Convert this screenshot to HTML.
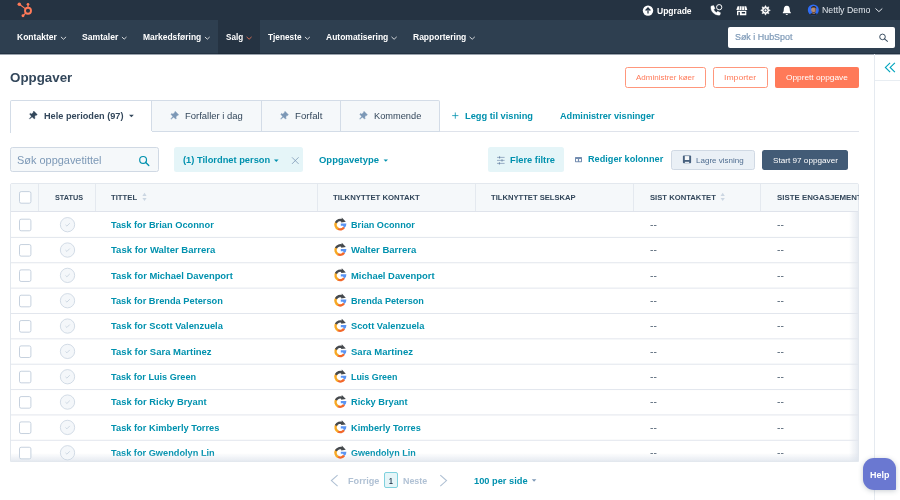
<!DOCTYPE html>
<html lang="no"><head><meta charset="utf-8"><title>Oppgaver</title>
<style>
html,body{margin:0;padding:0;}
body{width:900px;height:500px;overflow:hidden;background:#fff;position:relative;font-family:"Liberation Sans",sans-serif;}
.t{position:absolute;white-space:nowrap;line-height:1;transform-origin:0 50%;display:block;}
.a{position:absolute;box-sizing:border-box;}
svg{position:absolute;overflow:visible;}
</style></head><body>
<div class="a" style="left:0.00px;top:0.00px;width:900.00px;height:20.00px;background:#253342;"></div>
<div class="a" style="left:0.00px;top:20.00px;width:900.00px;height:34.00px;background:#2e3f50;"></div>
<div class="a" style="left:218.00px;top:20.00px;width:42.00px;height:34.00px;background:#253342;"></div>
<div class="a" style="left:0.00px;top:53.00px;width:900.00px;height:1.00px;background:rgba(20,32,45,0.4);"></div>
<div class="a" style="left:0.00px;top:54.00px;width:900.00px;height:1.00px;background:#9ba4ae;"></div>
<div class="a" style="left:728.00px;top:26.50px;width:167.00px;height:21.50px;background:#fff;border-radius:2px;"></div>
<div class="a" style="left:874.00px;top:54.00px;width:1.00px;height:446.00px;background:#e5eaf0;"></div>
<div class="a" style="left:875.00px;top:79.60px;width:25.00px;height:0.80px;background:#e8edf2;"></div>
<div class="a" style="left:625.10px;top:67.20px;width:80.60px;height:20.70px;border:1px solid #ff977c;border-radius:2.5px;background:#fff;"></div>
<div class="a" style="left:713.10px;top:67.20px;width:54.80px;height:20.70px;border:1px solid #ff977c;border-radius:2.5px;background:#fff;"></div>
<div class="a" style="left:775.00px;top:67.20px;width:83.80px;height:20.70px;background:#ff7a59;border-radius:2px;"></div>
<div class="a" style="left:10.00px;top:131.00px;width:849.00px;height:1.00px;background:#dfe3eb;"></div>
<div class="a" style="left:152.00px;top:100.00px;width:288.00px;height:32.00px;background:#f5f8fa;border:1px solid #d3dce7;border-left:none;border-radius:0 2px 0 0;"></div>
<div class="a" style="left:261.00px;top:101.00px;width:1.00px;height:30.00px;background:#d3dce7;"></div>
<div class="a" style="left:340.00px;top:101.00px;width:1.00px;height:30.00px;background:#d3dce7;"></div>
<div class="a" style="left:10.00px;top:100.00px;width:142.00px;height:33.00px;background:#fff;border:1px solid #d3dce7;border-bottom:none;border-radius:2px 0 0 0;"></div>
<div class="a" style="left:151.00px;top:131.00px;width:1.00px;height:2.00px;background:#fff;"></div>
<div class="a" style="left:10.00px;top:147.00px;width:149.00px;height:25.40px;background:#f5f8fa;border:1px solid #d0d9e4;border-radius:2.5px;"></div>
<div class="a" style="left:174.00px;top:147.00px;width:129.00px;height:25.40px;background:#e5f5f8;border-radius:2.5px;"></div>
<div class="a" style="left:488.00px;top:147.00px;width:76.00px;height:25.40px;background:#e5f5f8;border-radius:2.5px;"></div>
<div class="a" style="left:671.00px;top:150.00px;width:84.00px;height:19.60px;background:#eaf0f6;border:1px solid #d0d9e4;border-radius:2.5px;"></div>
<div class="a" style="left:762.00px;top:150.00px;width:86.00px;height:19.60px;background:#425b76;border-radius:2.5px;"></div>
<div class="a" style="left:10.00px;top:183.00px;width:849.00px;height:278.60px;border:1px solid #e3e8ee;border-radius:2px 2px 0 0;background:#fff;"></div>
<div class="a" style="left:10.50px;top:183.50px;width:847.70px;height:27.50px;background:#f5f8fa;"></div>
<div class="a" style="left:11.00px;top:211.00px;width:847.00px;height:1.00px;background:#dfe3eb;"></div>
<div class="a" style="left:38.20px;top:183.50px;width:0.80px;height:27.50px;background:#e4e9ef;"></div>
<div class="a" style="left:95.20px;top:183.50px;width:0.80px;height:27.50px;background:#e4e9ef;"></div>
<div class="a" style="left:317.00px;top:183.50px;width:0.80px;height:27.50px;background:#e4e9ef;"></div>
<div class="a" style="left:475.20px;top:183.50px;width:0.80px;height:27.50px;background:#e4e9ef;"></div>
<div class="a" style="left:633.00px;top:183.50px;width:0.80px;height:27.50px;background:#e4e9ef;"></div>
<div class="a" style="left:760.00px;top:183.50px;width:0.80px;height:27.50px;background:#e4e9ef;"></div>
<div class="a" style="left:384.30px;top:472.30px;width:13.70px;height:16.00px;background:#e5f5f8;border:1px solid #7fd1de;border-radius:2px;"></div>
<div class="a" style="left:863.00px;top:457.80px;width:33.20px;height:32.00px;background:#6a78d1;border-radius:11px 11px 1px 11px;box-shadow:0 1px 5px rgba(45,62,80,0.25);"></div>
<div class="a" style="left:0;top:0;width:900px;height:500px;overflow:hidden;will-change:transform;">
<span class="t" id="t0" style="left:656.70px;top:7.00px;font-size:8.84px;font-weight:700;color:#ffffff;transform:scaleX(0.9661);">Upgrade</span>
<span class="t" id="t1" style="left:822.00px;top:6.00px;font-size:9.1px;font-weight:400;color:#e3e8ee;transform:scaleX(0.9674);">Nettly Demo</span>
<span class="t" id="t2" style="left:17.20px;top:33.00px;font-size:8.84px;font-weight:700;color:#ffffff;transform:scaleX(0.9656);">Kontakter</span>
<span class="t" id="t3" style="left:81.70px;top:33.00px;font-size:8.84px;font-weight:700;color:#ffffff;transform:scaleX(0.9733);">Samtaler</span>
<span class="t" id="t4" style="left:142.80px;top:33.00px;font-size:8.84px;font-weight:700;color:#ffffff;transform:scaleX(0.9568);">Markedsføring</span>
<span class="t" id="t5" style="left:226.20px;top:33.00px;font-size:8.84px;font-weight:700;color:#ffffff;transform:scaleX(0.9166);">Salg</span>
<span class="t" id="t6" style="left:267.60px;top:33.00px;font-size:8.84px;font-weight:700;color:#ffffff;transform:scaleX(0.9378);">Tjeneste</span>
<span class="t" id="t7" style="left:325.70px;top:33.00px;font-size:8.84px;font-weight:700;color:#ffffff;transform:scaleX(0.9622);">Automatisering</span>
<span class="t" id="t8" style="left:412.50px;top:33.00px;font-size:8.84px;font-weight:700;color:#ffffff;transform:scaleX(0.9617);">Rapportering</span>
<span class="t" id="t9" style="left:734.60px;top:33.00px;font-size:9.1px;font-weight:400;-webkit-text-stroke:0.2px currentColor;color:#7c98b6;transform:scaleX(0.9788);">Søk i HubSpot</span>
<span class="t" id="t10" style="left:10.40px;top:71.00px;font-size:13.0px;font-weight:700;color:#33475b;transform:scaleX(1.0266);">Oppgaver</span>
<span class="t" id="t11" style="left:636.40px;top:74.00px;font-size:7.800000000000001px;font-weight:400;color:#ff7a59;transform:scaleX(1.0264);">Administrer køer</span>
<span class="t" id="t12" style="left:724.40px;top:74.00px;font-size:7.800000000000001px;font-weight:400;color:#ff7a59;transform:scaleX(1.1091);">Importer</span>
<span class="t" id="t13" style="left:786.00px;top:74.00px;font-size:7.800000000000001px;font-weight:400;color:#ffffff;transform:scaleX(1.0638);">Opprett oppgave</span>
<span class="t" id="t14" style="left:43.80px;top:112.00px;font-size:9.1px;font-weight:700;color:#33475b;transform:scaleX(1.0083);">Hele perioden (97)</span>
<span class="t" id="t15" style="left:185.20px;top:112.00px;font-size:9.1px;font-weight:400;color:#33475b;transform:scaleX(1.0412);">Forfaller i dag</span>
<span class="t" id="t16" style="left:295.00px;top:112.00px;font-size:9.1px;font-weight:400;color:#33475b;transform:scaleX(1.0628);">Forfalt</span>
<span class="t" id="t17" style="left:374.30px;top:112.00px;font-size:9.1px;font-weight:400;color:#33475b;transform:scaleX(1.0169);">Kommende</span>
<span class="t" id="t18" style="left:464.80px;top:112.00px;font-size:9.1px;font-weight:700;color:#0091ae;transform:scaleX(1.0194);">Legg til visning</span>
<span class="t" id="t19" style="left:560.10px;top:112.00px;font-size:9.1px;font-weight:700;color:#0091ae;transform:scaleX(1.0064);">Administrer visninger</span>
<span class="t" id="t20" style="left:17.20px;top:156.00px;font-size:10.4px;font-weight:400;color:#7c98b6;transform:scaleX(1.0523);">Søk oppgavetittel</span>
<span class="t" id="t21" style="left:182.80px;top:156.00px;font-size:9.1px;font-weight:700;color:#0091ae;transform:scaleX(1.0232);">(1) Tilordnet person</span>
<span class="t" id="t22" style="left:319.40px;top:156.00px;font-size:9.1px;font-weight:700;color:#0091ae;transform:scaleX(1.0415);">Oppgavetype</span>
<span class="t" id="t23" style="left:510.30px;top:156.00px;font-size:9.1px;font-weight:700;color:#0091ae;transform:scaleX(1.0235);">Flere filtre</span>
<span class="t" id="t24" style="left:587.80px;top:155.00px;font-size:9.1px;font-weight:700;color:#0091ae;transform:scaleX(1.0054);">Rediger kolonner</span>
<span class="t" id="t25" style="left:695.50px;top:157.00px;font-size:7.800000000000001px;font-weight:400;color:#506e91;transform:scaleX(1.0282);">Lagre visning</span>
<span class="t" id="t26" style="left:772.90px;top:157.00px;font-size:7.800000000000001px;font-weight:400;color:#ffffff;transform:scaleX(1.0470);">Start 97 oppgaver</span>
<span class="t" id="t27" style="left:54.70px;top:194.00px;font-size:7.800000000000001px;font-weight:700;color:#33475b;transform:scaleX(0.9357);">STATUS</span>
<span class="t" id="t28" style="left:111.40px;top:194.00px;font-size:7.800000000000001px;font-weight:700;color:#33475b;transform:scaleX(0.9878);">TITTEL</span>
<span class="t" id="t29" style="left:333.40px;top:194.00px;font-size:7.800000000000001px;font-weight:700;color:#33475b;transform:scaleX(0.9938);">TILKNYTTET KONTAKT</span>
<span class="t" id="t30" style="left:491.40px;top:194.00px;font-size:7.800000000000001px;font-weight:700;color:#33475b;transform:scaleX(0.9776);">TILKNYTTET SELSKAP</span>
<span class="t" id="t31" style="left:649.70px;top:194.00px;font-size:7.800000000000001px;font-weight:700;color:#33475b;transform:scaleX(0.9836);">SIST KONTAKTET</span>
<span class="t" id="t32" style="left:776.70px;top:194.00px;font-size:7.800000000000001px;font-weight:700;color:#33475b;transform:scaleX(1.0088);">SISTE ENGASJEMENT</span>
<span class="t" id="t33" style="left:111.40px;top:221.00px;font-size:9.1px;font-weight:700;color:#0091ae;transform:scaleX(1.0189);">Task for Brian Oconnor</span>
<span class="t" id="t34" style="left:351.10px;top:221.00px;font-size:9.1px;font-weight:700;color:#0091ae;transform:scaleX(1.0036);">Brian Oconnor</span>
<span class="t" id="t35" style="left:649.60px;top:221.00px;font-size:9.1px;font-weight:400;color:#33475b;transform:scaleX(1.1216);">--</span>
<span class="t" id="t36" style="left:776.50px;top:221.00px;font-size:9.1px;font-weight:400;color:#33475b;transform:scaleX(1.1216);">--</span>
<span class="t" id="t37" style="left:111.40px;top:246.00px;font-size:9.1px;font-weight:700;color:#0091ae;transform:scaleX(1.0464);">Task for Walter Barrera</span>
<span class="t" id="t38" style="left:351.10px;top:246.00px;font-size:9.1px;font-weight:700;color:#0091ae;transform:scaleX(1.0474);">Walter Barrera</span>
<span class="t" id="t39" style="left:649.60px;top:246.00px;font-size:9.1px;font-weight:400;color:#33475b;transform:scaleX(1.1216);">--</span>
<span class="t" id="t40" style="left:776.50px;top:246.00px;font-size:9.1px;font-weight:400;color:#33475b;transform:scaleX(1.1216);">--</span>
<span class="t" id="t41" style="left:111.40px;top:272.00px;font-size:9.1px;font-weight:700;color:#0091ae;transform:scaleX(1.0322);">Task for Michael Davenport</span>
<span class="t" id="t42" style="left:351.10px;top:272.00px;font-size:9.1px;font-weight:700;color:#0091ae;transform:scaleX(1.0339);">Michael Davenport</span>
<span class="t" id="t43" style="left:649.60px;top:272.00px;font-size:9.1px;font-weight:400;color:#33475b;transform:scaleX(1.1216);">--</span>
<span class="t" id="t44" style="left:776.50px;top:272.00px;font-size:9.1px;font-weight:400;color:#33475b;transform:scaleX(1.1216);">--</span>
<span class="t" id="t45" style="left:111.40px;top:297.00px;font-size:9.1px;font-weight:700;color:#0091ae;transform:scaleX(1.0173);">Task for Brenda Peterson</span>
<span class="t" id="t46" style="left:351.10px;top:297.00px;font-size:9.1px;font-weight:700;color:#0091ae;transform:scaleX(1.0016);">Brenda Peterson</span>
<span class="t" id="t47" style="left:649.60px;top:297.00px;font-size:9.1px;font-weight:400;color:#33475b;transform:scaleX(1.1216);">--</span>
<span class="t" id="t48" style="left:776.50px;top:297.00px;font-size:9.1px;font-weight:400;color:#33475b;transform:scaleX(1.1216);">--</span>
<span class="t" id="t49" style="left:111.40px;top:322.00px;font-size:9.1px;font-weight:700;color:#0091ae;transform:scaleX(1.0266);">Task for Scott Valenzuela</span>
<span class="t" id="t50" style="left:351.10px;top:322.00px;font-size:9.1px;font-weight:700;color:#0091ae;transform:scaleX(1.0214);">Scott Valenzuela</span>
<span class="t" id="t51" style="left:649.60px;top:322.00px;font-size:9.1px;font-weight:400;color:#33475b;transform:scaleX(1.1216);">--</span>
<span class="t" id="t52" style="left:776.50px;top:322.00px;font-size:9.1px;font-weight:400;color:#33475b;transform:scaleX(1.1216);">--</span>
<span class="t" id="t53" style="left:111.40px;top:348.00px;font-size:9.1px;font-weight:700;color:#0091ae;transform:scaleX(1.0440);">Task for Sara Martinez</span>
<span class="t" id="t54" style="left:351.10px;top:348.00px;font-size:9.1px;font-weight:700;color:#0091ae;transform:scaleX(1.0483);">Sara Martinez</span>
<span class="t" id="t55" style="left:649.60px;top:348.00px;font-size:9.1px;font-weight:400;color:#33475b;transform:scaleX(1.1216);">--</span>
<span class="t" id="t56" style="left:776.50px;top:348.00px;font-size:9.1px;font-weight:400;color:#33475b;transform:scaleX(1.1216);">--</span>
<span class="t" id="t57" style="left:111.40px;top:373.00px;font-size:9.1px;font-weight:700;color:#0091ae;transform:scaleX(1.0043);">Task for Luis Green</span>
<span class="t" id="t58" style="left:351.10px;top:373.00px;font-size:9.1px;font-weight:700;color:#0091ae;transform:scaleX(0.9765);">Luis Green</span>
<span class="t" id="t59" style="left:649.60px;top:373.00px;font-size:9.1px;font-weight:400;color:#33475b;transform:scaleX(1.1216);">--</span>
<span class="t" id="t60" style="left:776.50px;top:373.00px;font-size:9.1px;font-weight:400;color:#33475b;transform:scaleX(1.1216);">--</span>
<span class="t" id="t61" style="left:111.40px;top:398.00px;font-size:9.1px;font-weight:700;color:#0091ae;transform:scaleX(1.0299);">Task for Ricky Bryant</span>
<span class="t" id="t62" style="left:351.10px;top:398.00px;font-size:9.1px;font-weight:700;color:#0091ae;transform:scaleX(1.0178);">Ricky Bryant</span>
<span class="t" id="t63" style="left:649.60px;top:398.00px;font-size:9.1px;font-weight:400;color:#33475b;transform:scaleX(1.1216);">--</span>
<span class="t" id="t64" style="left:776.50px;top:398.00px;font-size:9.1px;font-weight:400;color:#33475b;transform:scaleX(1.1216);">--</span>
<span class="t" id="t65" style="left:111.40px;top:424.00px;font-size:9.1px;font-weight:700;color:#0091ae;transform:scaleX(1.0198);">Task for Kimberly Torres</span>
<span class="t" id="t66" style="left:351.10px;top:424.00px;font-size:9.1px;font-weight:700;color:#0091ae;transform:scaleX(1.0105);">Kimberly Torres</span>
<span class="t" id="t67" style="left:649.60px;top:424.00px;font-size:9.1px;font-weight:400;color:#33475b;transform:scaleX(1.1216);">--</span>
<span class="t" id="t68" style="left:776.50px;top:424.00px;font-size:9.1px;font-weight:400;color:#33475b;transform:scaleX(1.1216);">--</span>
<span class="t" id="t69" style="left:111.40px;top:449.00px;font-size:9.1px;font-weight:700;color:#0091ae;transform:scaleX(1.0126);">Task for Gwendolyn Lin</span>
<span class="t" id="t70" style="left:351.10px;top:449.00px;font-size:9.1px;font-weight:700;color:#0091ae;transform:scaleX(0.9928);">Gwendolyn Lin</span>
<span class="t" id="t71" style="left:649.60px;top:449.00px;font-size:9.1px;font-weight:400;color:#33475b;transform:scaleX(1.1216);">--</span>
<span class="t" id="t72" style="left:776.50px;top:449.00px;font-size:9.1px;font-weight:400;color:#33475b;transform:scaleX(1.1216);">--</span>
<span class="t" id="t73" style="left:348.00px;top:477.00px;font-size:9.1px;font-weight:700;color:#b0c1d4;transform:scaleX(1.0023);">Forrige</span>
<span class="t" id="t74" style="left:389.20px;top:477.00px;font-size:9.1px;font-weight:700;color:#33475b;transform:scaleX(0.7506);">1</span>
<span class="t" id="t75" style="left:403.00px;top:477.00px;font-size:9.1px;font-weight:700;color:#b0c1d4;transform:scaleX(0.9765);">Neste</span>
<span class="t" id="t76" style="left:473.90px;top:477.00px;font-size:9.1px;font-weight:700;color:#0091ae;transform:scaleX(1.0194);">100 per side</span>
<span class="t" id="t77" style="left:869.80px;top:471.00px;font-size:9.1px;font-weight:700;color:#ffffff;transform:scaleX(0.9838);">Help</span>
</div>
<div class="a" style="left:858.8px;top:182px;width:15px;height:31px;background:#fff;"></div>
<div class="a" style="left:848.5px;top:212px;width:9.5px;height:249px;background:linear-gradient(to right,rgba(223,227,235,0),rgba(220,226,235,0.7));"></div>
<div class="a" style="left:11px;top:452.5px;width:847px;height:8.5px;background:linear-gradient(to bottom,rgba(223,227,235,0),rgba(220,226,235,0.7));"></div>
<svg width="900" height="500" viewBox="0 0 900 500" style="left:0;top:0;">
<circle cx="28" cy="10.8" r="3" fill="none" stroke="#ff7a59" stroke-width="1.9"/>
<circle cx="28" cy="4.3" r="1.35" fill="#ff7a59"/><path d="M28 4.3 L28 8" stroke="#ff7a59" stroke-width="1.2"/>
<circle cx="19.3" cy="4.2" r="1.75" fill="#ff7a59"/><path d="M19.3 4.2 L25.6 8.9" stroke="#ff7a59" stroke-width="1.15"/>
<circle cx="23" cy="15.8" r="1.45" fill="#ff7a59"/><path d="M23 15.8 L25.8 13" stroke="#ff7a59" stroke-width="1.15"/>
<circle cx="648" cy="10.6" r="5.2" fill="#fff"/><path d="M648 13.6 L648 8.4 M645.6 10.5 L648 8.0 L650.4 10.5" fill="none" stroke="#253342" stroke-width="1.25" stroke-linejoin="miter"/>
<path d="M711 6.2 L713.6 5.5 L715 8.6 L713.7 9.6 C714.3 11 715.2 12 716.6 12.6 L717.6 11.3 L720.5 12.8 L719.9 15.1 C714.6 15.6 710.2 11.2 711 6.2 Z" fill="#fff" stroke="#fff" stroke-width="0.4" stroke-linejoin="round"/>
<circle cx="719.2" cy="7.2" r="2.65" fill="#253342" stroke="#fff" stroke-width="1.0"/>
<path d="M737.60 6.2 L739.47 6.2 L738.77 9.9 L736.30 9.9 Z" fill="#fff"/>
<path d="M740.03 6.2 L741.62 6.2 L741.52 9.9 L739.33 9.9 Z" fill="#fff"/>
<path d="M742.18 6.2 L743.77 6.2 L744.27 9.9 L742.08 9.9 Z" fill="#fff"/>
<path d="M744.33 6.2 L746.20 6.2 L747.30 9.9 L744.83 9.9 Z" fill="#fff"/>
<path d="M737 10.7 L746.3 10.7 L746.3 15.2 L737 15.2 Z M738.4 12.0 L738.4 15.2 L739.9 15.2 L739.9 12.0 Z M741.7 11.9 L741.7 13.5 L745.1 13.5 L745.1 11.9 Z" fill="#fff" fill-rule="evenodd"/>
<path d="M765.50 5.45 L766.65 7.53 L768.93 6.87 L768.27 9.15 L770.35 10.30 L768.27 11.45 L768.93 13.73 L766.65 13.07 L765.50 15.15 L764.35 13.07 L762.07 13.73 L762.73 11.45 L760.65 10.30 L762.73 9.15 L762.07 6.87 L764.35 7.53 Z" fill="#fff" stroke="#fff" stroke-width="0.5" stroke-linejoin="round"/>
<circle cx="765.5" cy="10.3" r="1.5" fill="none" stroke="#253342" stroke-width="0.95"/>
<path d="M786.8 5.8 C789.2 5.8 789.8 7.8 789.8 9.6 C789.8 11.2 790.2 12 790.8 12.6 L790.8 13.3 L782.8 13.3 L782.8 12.6 C783.4 12 783.8 11.2 783.8 9.6 C783.8 7.8 784.4 5.8 786.8 5.8 Z" fill="#fff"/><path d="M785.7 14.1 L787.9 14.1 C787.9 15.3 785.7 15.3 785.7 14.1 Z" fill="#fff"/>
<clipPath id="av"><circle cx="813.3" cy="10" r="5.5"/></clipPath>
<g clip-path="url(#av)"><rect x="807" y="4" width="13" height="12" fill="#2f6df6"/><ellipse cx="813.7" cy="16.4" rx="5.2" ry="3.3" fill="#20242b"/><rect x="812.5" y="11.6" width="2.5" height="2.4" fill="#8d6a59"/><ellipse cx="813.7" cy="9.6" rx="2.5" ry="3.45" fill="#b38b76"/><path d="M814.3 6.3 C816.6 6.6 816.6 11.6 814.6 13 C815.2 11 815.2 8.4 814.3 6.3 Z" fill="#6d5246" opacity="0.75"/><path d="M811.1 8.8 C810.6 5.0 816.9 5.0 816.3 8.8 C815.7 7.0 811.7 7.0 811.1 8.8 Z" fill="#2b211d"/><path d="M811.6 10.9 C812 13.8 815.4 13.8 815.8 10.9 C815.1 12.4 812.3 12.4 811.6 10.9 Z" fill="#5b4034" opacity="0.8"/></g>
<path d="M875.80 8.77 L878.90 11.63 L882.00 8.77" fill="none" stroke="#e3e8ee" stroke-width="1.0" stroke-linecap="round" stroke-linejoin="round"/>
<path d="M61.20 37.14 L63.50 39.26 L65.80 37.14" fill="none" stroke="#fff" stroke-width="0.8" stroke-linecap="round" stroke-linejoin="round"/>
<path d="M122.20 37.28 L124.20 39.12 L126.20 37.28" fill="none" stroke="#fff" stroke-width="0.8" stroke-linecap="round" stroke-linejoin="round"/>
<path d="M205.20 37.23 L207.30 39.17 L209.40 37.23" fill="none" stroke="#fff" stroke-width="0.8" stroke-linecap="round" stroke-linejoin="round"/>
<path d="M246.90 37.19 L249.10 39.21 L251.30 37.19" fill="none" stroke="#ff7a59" stroke-width="0.8" stroke-linecap="round" stroke-linejoin="round"/>
<path d="M305.20 37.19 L307.40 39.21 L309.60 37.19" fill="none" stroke="#fff" stroke-width="0.8" stroke-linecap="round" stroke-linejoin="round"/>
<path d="M391.80 37.14 L394.10 39.26 L396.40 37.14" fill="none" stroke="#fff" stroke-width="0.8" stroke-linecap="round" stroke-linejoin="round"/>
<path d="M469.90 37.14 L472.20 39.26 L474.50 37.14" fill="none" stroke="#fff" stroke-width="0.8" stroke-linecap="round" stroke-linejoin="round"/>
<circle cx="882.5" cy="36.9" r="2.8" fill="none" stroke="#33475b" stroke-width="0.95"/><path d="M884.48 38.88 L887.50 41.30" stroke="#33475b" stroke-width="1.045" stroke-linecap="round"/>
<path d="M890.1 62.8 L885.4 67.45 L890.1 72.1 M894.9 62.8 L890.2 67.45 L894.9 72.1" fill="none" stroke="#00a4bd" stroke-width="1.15"/>
<path d="M29.71 119.11 L32.15 117.03 L34.31 118.90 L35.23 117.98 L34.52 116.99 L35.79 115.01 L36.36 115.44 L37.28 114.52 L33.88 111.12 L32.96 112.04 L33.39 112.61 L31.41 113.88 L30.42 113.17 L29.50 114.09 L31.37 116.25 L29.29 118.69 Z" fill="#33475b" stroke="#33475b" stroke-width="0.3" stroke-linejoin="round"/>
<path d="M171.11 119.31 L173.55 117.23 L175.71 119.10 L176.63 118.18 L175.92 117.19 L177.19 115.21 L177.76 115.64 L178.68 114.72 L175.28 111.32 L174.36 112.24 L174.79 112.81 L172.81 114.08 L171.82 113.37 L170.90 114.29 L172.77 116.45 L170.69 118.89 Z" fill="#7c98b6" stroke="#7c98b6" stroke-width="0.3" stroke-linejoin="round"/>
<path d="M280.91 119.31 L283.35 117.23 L285.51 119.10 L286.43 118.18 L285.72 117.19 L286.99 115.21 L287.56 115.64 L288.48 114.72 L285.08 111.32 L284.16 112.24 L284.59 112.81 L282.61 114.08 L281.62 113.37 L280.70 114.29 L282.57 116.45 L280.49 118.89 Z" fill="#7c98b6" stroke="#7c98b6" stroke-width="0.3" stroke-linejoin="round"/>
<path d="M359.91 119.31 L362.35 117.23 L364.51 119.10 L365.43 118.18 L364.72 117.19 L365.99 115.21 L366.56 115.64 L367.48 114.72 L364.08 111.32 L363.16 112.24 L363.59 112.81 L361.61 114.08 L360.62 113.37 L359.70 114.29 L361.57 116.45 L359.49 118.89 Z" fill="#7c98b6" stroke="#7c98b6" stroke-width="0.3" stroke-linejoin="round"/>
<path d="M129.00 114.70 L133.80 114.70 L131.40 117.34 Z" fill="#33475b"/>
<path d="M452.2 115.6 L458.4 115.6 M455.3 112.5 L455.3 118.7" stroke="#0091ae" stroke-width="0.8"/>
<circle cx="143.1" cy="159.9" r="3.4" fill="none" stroke="#0091ae" stroke-width="1.2"/><path d="M145.50 162.30 L148.80 165.50" stroke="#0091ae" stroke-width="1.32" stroke-linecap="round"/>
<path d="M274.00 159.40 L278.60 159.40 L276.30 161.93 Z" fill="#0091ae"/>
<path d="M383.60 159.40 L388.00 159.40 L385.80 161.82 Z" fill="#0091ae"/>
<path d="M292 157.3 L298.6 163.9 M298.6 157.3 L292 163.9" stroke="#7c98b6" stroke-width="0.8"/>
<path d="M497 157.4 L504.6 157.4 M497 160.4 L504.6 160.4 M497 163.4 L504.6 163.4" stroke="#6480a3" stroke-width="0.6"/>
<path d="M499.6 156.3 L499.6 158.5 M502 159.3 L502 161.5 M499.4 162.3 L499.4 164.5" stroke="#6480a3" stroke-width="0.9"/>
<path d="M575.6 157.1 L581.4 157.1 Q582 157.1 582 157.7 L582 161.6 Q582 162.2 581.4 162.2 L575.6 162.2 Q575 162.2 575 161.6 L575 157.7 Q575 157.1 575.6 157.1 Z M576 158.9 L576 161.3 L577.9 161.3 L577.9 158.9 Z M579.1 158.9 L579.1 161.3 L581 161.3 L581 158.9 Z" fill="#748db0" fill-rule="evenodd"/>
<rect x="682.9" y="155.6" width="8.2" height="7.6" rx="0.9" fill="#47617f"/>
<rect x="684.8" y="156.1" width="4.4" height="3.9" fill="#f7f9fb"/>
<rect x="684.9" y="161.8" width="4.2" height="1.4" fill="#e4eaf1"/>
<path d="M142.4 195.9 L146.6 195.9 L144.5 192.7 Z" fill="#cbd6e2"/><path d="M142.4 197.9 L146.6 197.9 L144.5 201 Z" fill="#cbd6e2"/>
<path d="M720.6 195.9 L724.8000000000001 195.9 L722.7 192.7 Z" fill="#cbd6e2"/><path d="M720.6 197.9 L724.8000000000001 197.9 L722.7 201 Z" fill="#cbd6e2"/>
<rect x="10.6" y="236.90" width="847.6" height="1" fill="#e2e6ed"/>
<rect x="10.6" y="262.26" width="847.6" height="1" fill="#e2e6ed"/>
<rect x="10.6" y="287.62" width="847.6" height="1" fill="#e2e6ed"/>
<rect x="10.6" y="312.98" width="847.6" height="1" fill="#e2e6ed"/>
<rect x="10.6" y="338.34" width="847.6" height="1" fill="#e2e6ed"/>
<rect x="10.6" y="363.70" width="847.6" height="1" fill="#e2e6ed"/>
<rect x="10.6" y="389.06" width="847.6" height="1" fill="#e2e6ed"/>
<rect x="10.6" y="414.42" width="847.6" height="1" fill="#e2e6ed"/>
<rect x="10.6" y="439.78" width="847.6" height="1" fill="#e2e6ed"/>
<rect x="19.5" y="191.6" width="11.4" height="11.6" rx="1.6" fill="#fff" stroke="#c0ccda" stroke-width="0.9"/>
<rect x="19.5" y="219.20" width="11.4" height="11.6" rx="1.6" fill="#fff" stroke="#c0ccda" stroke-width="0.9"/>
<circle cx="67.5" cy="224.70" r="7.15" fill="#f4f7fa" stroke="#c8d3df" stroke-width="0.8"/>
<path d="M65.5 224.80 L66.9 226.10 L69.8 223.20" fill="none" stroke="#c3cfdc" stroke-width="0.8"/>
<path d="M344.05 227.40 A4.7 4.7 0 0 1 337.85 228.77" fill="none" stroke="#f2672a" stroke-width="2.4"/><path d="M338.21 228.96 A4.7 4.7 0 0 1 336.35 222.00" fill="none" stroke="#f7a823" stroke-width="2.4"/><path d="M335.94 222.71 A4.7 4.7 0 0 1 342.55 220.63" fill="none" stroke="#45494d" stroke-width="2.4"/><path d="M341.80 217.50 L345.80 221.70 L341.10 222.40 Z" fill="#45494d"/><path d="M340.80 223.60 L346.40 223.60 L346.00 226.10 L344.40 228.00 L343.00 225.80 L340.80 225.80 Z" fill="#5a94f3"/>
<rect x="19.5" y="244.54" width="11.4" height="11.6" rx="1.6" fill="#fff" stroke="#c0ccda" stroke-width="0.9"/>
<circle cx="67.5" cy="250.04" r="7.15" fill="#f4f7fa" stroke="#c8d3df" stroke-width="0.8"/>
<path d="M65.5 250.14 L66.9 251.44 L69.8 248.54" fill="none" stroke="#c3cfdc" stroke-width="0.8"/>
<path d="M344.05 252.74 A4.7 4.7 0 0 1 337.85 254.11" fill="none" stroke="#f2672a" stroke-width="2.4"/><path d="M338.21 254.30 A4.7 4.7 0 0 1 336.35 247.34" fill="none" stroke="#f7a823" stroke-width="2.4"/><path d="M335.94 248.05 A4.7 4.7 0 0 1 342.55 245.97" fill="none" stroke="#45494d" stroke-width="2.4"/><path d="M341.80 242.84 L345.80 247.04 L341.10 247.74 Z" fill="#45494d"/><path d="M340.80 248.94 L346.40 248.94 L346.00 251.44 L344.40 253.34 L343.00 251.14 L340.80 251.14 Z" fill="#5a94f3"/>
<rect x="19.5" y="269.88" width="11.4" height="11.6" rx="1.6" fill="#fff" stroke="#c0ccda" stroke-width="0.9"/>
<circle cx="67.5" cy="275.38" r="7.15" fill="#f4f7fa" stroke="#c8d3df" stroke-width="0.8"/>
<path d="M65.5 275.48 L66.9 276.78 L69.8 273.88" fill="none" stroke="#c3cfdc" stroke-width="0.8"/>
<path d="M344.05 278.08 A4.7 4.7 0 0 1 337.85 279.45" fill="none" stroke="#f2672a" stroke-width="2.4"/><path d="M338.21 279.64 A4.7 4.7 0 0 1 336.35 272.68" fill="none" stroke="#f7a823" stroke-width="2.4"/><path d="M335.94 273.39 A4.7 4.7 0 0 1 342.55 271.31" fill="none" stroke="#45494d" stroke-width="2.4"/><path d="M341.80 268.18 L345.80 272.38 L341.10 273.08 Z" fill="#45494d"/><path d="M340.80 274.28 L346.40 274.28 L346.00 276.78 L344.40 278.68 L343.00 276.48 L340.80 276.48 Z" fill="#5a94f3"/>
<rect x="19.5" y="295.22" width="11.4" height="11.6" rx="1.6" fill="#fff" stroke="#c0ccda" stroke-width="0.9"/>
<circle cx="67.5" cy="300.72" r="7.15" fill="#f4f7fa" stroke="#c8d3df" stroke-width="0.8"/>
<path d="M65.5 300.82 L66.9 302.12 L69.8 299.22" fill="none" stroke="#c3cfdc" stroke-width="0.8"/>
<path d="M344.05 303.42 A4.7 4.7 0 0 1 337.85 304.79" fill="none" stroke="#f2672a" stroke-width="2.4"/><path d="M338.21 304.98 A4.7 4.7 0 0 1 336.35 298.02" fill="none" stroke="#f7a823" stroke-width="2.4"/><path d="M335.94 298.73 A4.7 4.7 0 0 1 342.55 296.65" fill="none" stroke="#45494d" stroke-width="2.4"/><path d="M341.80 293.52 L345.80 297.72 L341.10 298.42 Z" fill="#45494d"/><path d="M340.80 299.62 L346.40 299.62 L346.00 302.12 L344.40 304.02 L343.00 301.82 L340.80 301.82 Z" fill="#5a94f3"/>
<rect x="19.5" y="320.56" width="11.4" height="11.6" rx="1.6" fill="#fff" stroke="#c0ccda" stroke-width="0.9"/>
<circle cx="67.5" cy="326.06" r="7.15" fill="#f4f7fa" stroke="#c8d3df" stroke-width="0.8"/>
<path d="M65.5 326.16 L66.9 327.46 L69.8 324.56" fill="none" stroke="#c3cfdc" stroke-width="0.8"/>
<path d="M344.05 328.76 A4.7 4.7 0 0 1 337.85 330.13" fill="none" stroke="#f2672a" stroke-width="2.4"/><path d="M338.21 330.32 A4.7 4.7 0 0 1 336.35 323.36" fill="none" stroke="#f7a823" stroke-width="2.4"/><path d="M335.94 324.07 A4.7 4.7 0 0 1 342.55 321.99" fill="none" stroke="#45494d" stroke-width="2.4"/><path d="M341.80 318.86 L345.80 323.06 L341.10 323.76 Z" fill="#45494d"/><path d="M340.80 324.96 L346.40 324.96 L346.00 327.46 L344.40 329.36 L343.00 327.16 L340.80 327.16 Z" fill="#5a94f3"/>
<rect x="19.5" y="345.90" width="11.4" height="11.6" rx="1.6" fill="#fff" stroke="#c0ccda" stroke-width="0.9"/>
<circle cx="67.5" cy="351.40" r="7.15" fill="#f4f7fa" stroke="#c8d3df" stroke-width="0.8"/>
<path d="M65.5 351.50 L66.9 352.80 L69.8 349.90" fill="none" stroke="#c3cfdc" stroke-width="0.8"/>
<path d="M344.05 354.10 A4.7 4.7 0 0 1 337.85 355.47" fill="none" stroke="#f2672a" stroke-width="2.4"/><path d="M338.21 355.66 A4.7 4.7 0 0 1 336.35 348.70" fill="none" stroke="#f7a823" stroke-width="2.4"/><path d="M335.94 349.41 A4.7 4.7 0 0 1 342.55 347.33" fill="none" stroke="#45494d" stroke-width="2.4"/><path d="M341.80 344.20 L345.80 348.40 L341.10 349.10 Z" fill="#45494d"/><path d="M340.80 350.30 L346.40 350.30 L346.00 352.80 L344.40 354.70 L343.00 352.50 L340.80 352.50 Z" fill="#5a94f3"/>
<rect x="19.5" y="371.24" width="11.4" height="11.6" rx="1.6" fill="#fff" stroke="#c0ccda" stroke-width="0.9"/>
<circle cx="67.5" cy="376.74" r="7.15" fill="#f4f7fa" stroke="#c8d3df" stroke-width="0.8"/>
<path d="M65.5 376.84 L66.9 378.14 L69.8 375.24" fill="none" stroke="#c3cfdc" stroke-width="0.8"/>
<path d="M344.05 379.44 A4.7 4.7 0 0 1 337.85 380.81" fill="none" stroke="#f2672a" stroke-width="2.4"/><path d="M338.21 381.00 A4.7 4.7 0 0 1 336.35 374.04" fill="none" stroke="#f7a823" stroke-width="2.4"/><path d="M335.94 374.75 A4.7 4.7 0 0 1 342.55 372.67" fill="none" stroke="#45494d" stroke-width="2.4"/><path d="M341.80 369.54 L345.80 373.74 L341.10 374.44 Z" fill="#45494d"/><path d="M340.80 375.64 L346.40 375.64 L346.00 378.14 L344.40 380.04 L343.00 377.84 L340.80 377.84 Z" fill="#5a94f3"/>
<rect x="19.5" y="396.58" width="11.4" height="11.6" rx="1.6" fill="#fff" stroke="#c0ccda" stroke-width="0.9"/>
<circle cx="67.5" cy="402.08" r="7.15" fill="#f4f7fa" stroke="#c8d3df" stroke-width="0.8"/>
<path d="M65.5 402.18 L66.9 403.48 L69.8 400.58" fill="none" stroke="#c3cfdc" stroke-width="0.8"/>
<path d="M344.05 404.78 A4.7 4.7 0 0 1 337.85 406.15" fill="none" stroke="#f2672a" stroke-width="2.4"/><path d="M338.21 406.34 A4.7 4.7 0 0 1 336.35 399.38" fill="none" stroke="#f7a823" stroke-width="2.4"/><path d="M335.94 400.09 A4.7 4.7 0 0 1 342.55 398.01" fill="none" stroke="#45494d" stroke-width="2.4"/><path d="M341.80 394.88 L345.80 399.08 L341.10 399.78 Z" fill="#45494d"/><path d="M340.80 400.98 L346.40 400.98 L346.00 403.48 L344.40 405.38 L343.00 403.18 L340.80 403.18 Z" fill="#5a94f3"/>
<rect x="19.5" y="421.92" width="11.4" height="11.6" rx="1.6" fill="#fff" stroke="#c0ccda" stroke-width="0.9"/>
<circle cx="67.5" cy="427.42" r="7.15" fill="#f4f7fa" stroke="#c8d3df" stroke-width="0.8"/>
<path d="M65.5 427.52 L66.9 428.82 L69.8 425.92" fill="none" stroke="#c3cfdc" stroke-width="0.8"/>
<path d="M344.05 430.12 A4.7 4.7 0 0 1 337.85 431.49" fill="none" stroke="#f2672a" stroke-width="2.4"/><path d="M338.21 431.68 A4.7 4.7 0 0 1 336.35 424.72" fill="none" stroke="#f7a823" stroke-width="2.4"/><path d="M335.94 425.43 A4.7 4.7 0 0 1 342.55 423.35" fill="none" stroke="#45494d" stroke-width="2.4"/><path d="M341.80 420.22 L345.80 424.42 L341.10 425.12 Z" fill="#45494d"/><path d="M340.80 426.32 L346.40 426.32 L346.00 428.82 L344.40 430.72 L343.00 428.52 L340.80 428.52 Z" fill="#5a94f3"/>
<rect x="19.5" y="447.26" width="11.4" height="11.6" rx="1.6" fill="#fff" stroke="#c0ccda" stroke-width="0.9"/>
<circle cx="67.5" cy="452.76" r="7.15" fill="#f4f7fa" stroke="#c8d3df" stroke-width="0.8"/>
<path d="M65.5 452.86 L66.9 454.16 L69.8 451.26" fill="none" stroke="#c3cfdc" stroke-width="0.8"/>
<path d="M344.05 455.46 A4.7 4.7 0 0 1 337.85 456.83" fill="none" stroke="#f2672a" stroke-width="2.4"/><path d="M338.21 457.02 A4.7 4.7 0 0 1 336.35 450.06" fill="none" stroke="#f7a823" stroke-width="2.4"/><path d="M335.94 450.77 A4.7 4.7 0 0 1 342.55 448.69" fill="none" stroke="#45494d" stroke-width="2.4"/><path d="M341.80 445.56 L345.80 449.76 L341.10 450.46 Z" fill="#45494d"/><path d="M340.80 451.66 L346.40 451.66 L346.00 454.16 L344.40 456.06 L343.00 453.86 L340.80 453.86 Z" fill="#5a94f3"/>
<path d="M337.6 475.1 L331.4 480.6 L337.6 486.1" fill="none" stroke="#b0c1d4" stroke-width="1.1"/>
<path d="M440.3 475.1 L446.5 480.6 L440.3 486.1" fill="none" stroke="#b0c1d4" stroke-width="1.1"/>
<path d="M531.80 479.30 L536.40 479.30 L534.10 481.83 Z" fill="#7c98b6"/>
</svg>
</body></html>
